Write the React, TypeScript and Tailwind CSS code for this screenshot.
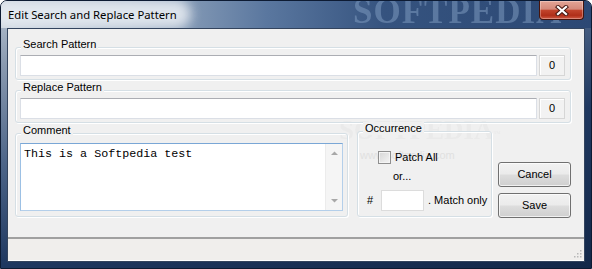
import React from "react";

function GroupBox({
  label,
  className,
  children,
}: {
  label: string;
  className?: string;
  children: React.ReactNode;
}) {
  return (
    <div
      className={
        "relative rounded-[3px] border border-[#d5dfe5] shadow-[inset_1px_1px_0_#ffffff,1px_1px_0_#ffffff] " +
        (className ?? "")
      }
    >
      <span className="absolute left-[5px] top-[-10px] bg-[#f0f0f0] px-[2px] leading-[13px]">
        {label}
      </span>
      {children}
    </div>
  );
}

function PatternRow() {
  return (
    <div className="flex gap-[2px]">
      <div className="h-[21px] flex-1 border border-[#dbdfe6] border-t-[#abadb3] bg-white" />
      <div className="flex h-[21px] w-[26px] items-center justify-center border border-[#d6d6d6] bg-[#f2f2f2] shadow-[inset_1px_1px_0_#ffffff]">
        0
      </div>
    </div>
  );
}

function WinButton({ children }: { children: React.ReactNode }) {
  return (
    <div className="flex h-[25px] w-[73px] items-center justify-center rounded-[3px] border border-[#707070] bg-[linear-gradient(180deg,#f2f2f2_0%,#ebebeb_48%,#dddddd_52%,#cfcfcf_100%)] text-[11px] shadow-[inset_0_0_0_1px_rgba(255,255,255,0.7)]">
      {children}
    </div>
  );
}

export default function App() {
  return (
    <div className="h-[269px] w-[592px] overflow-hidden bg-white font-['Liberation_Sans',Arial,sans-serif] text-[11px] leading-[13px] text-black">
      <div className="relative flex h-full w-full flex-col overflow-hidden rounded-t-[7px] border border-[#0d1b33] bg-[linear-gradient(165deg,#b9c5d3_0%,#8a9ab0_15%,#4e6689_38%,#1f3860_62%,#132849_100%)]">
        {/* Title bar */}
        <div className="relative flex h-[27px] shrink-0 items-start overflow-hidden bg-[linear-gradient(90deg,#c3cdd9_0%,#9fb0c4_22%,#5a779f_45%,#35537f_65%,#2c4874_100%)]">
          <div className="absolute left-[-10px] top-[-2px] h-[30px] w-[200px] rounded-full bg-[#e6ebf1] opacity-90 blur-[6px]" />
          <span className="absolute left-[352px] top-[-9px] whitespace-nowrap font-['Liberation_Serif',serif] text-[35px] font-bold leading-[40px] tracking-[1px] text-[#7d99be] opacity-55 blur-[0.7px]">
            SOFTPEDIA
          </span>
          <span className="relative ml-[7px] mt-[6px] whitespace-nowrap font-['Noto_Sans',sans-serif] text-[11.3px] leading-[15px] text-black">
            Edit Search and Replace Pattern
          </span>
          <div className="absolute right-[7px] top-0 flex h-[19px] w-[45px] items-center justify-center rounded-b-[4px] border border-t-0 border-[#47140c] bg-[linear-gradient(180deg,#e3a596_0%,#d4897a_45%,#c1442c_52%,#b02f19_80%,#cf5a43_100%)] shadow-[inset_0_0_0_1px_rgba(255,255,255,0.3)]">
            <svg width="14" height="11" viewBox="0 0 14 11">
              <g strokeLinecap="square">
                <line x1="3" y1="2" x2="11" y2="9" stroke="#4a1b14" strokeWidth="4.2" />
                <line x1="11" y1="2" x2="3" y2="9" stroke="#4a1b14" strokeWidth="4.2" />
                <line x1="3" y1="2" x2="11" y2="9" stroke="#ffffff" strokeWidth="2.2" />
                <line x1="11" y1="2" x2="3" y2="9" stroke="#ffffff" strokeWidth="2.2" />
              </g>
            </svg>
          </div>
        </div>

        {/* Body */}
        <div className="flex flex-1 px-[6px] pb-[6px]">
          <div className="relative flex flex-1 flex-col border border-[#33445e] bg-[#f0f0f0]">
            {/* client watermark */}
            <span className="pointer-events-none absolute left-[331px] top-[86px] whitespace-nowrap font-['Liberation_Serif',serif] text-[27px] font-bold leading-[30px] text-[#e8e8e8] opacity-70">
              SOFTPEDIA<sup className="text-[7px]">™</sup>
            </span>
            <span className="pointer-events-none absolute left-[352px] top-[120px] whitespace-nowrap text-[11px] text-[#e0e0e0]">
              www.softpedia.com
            </span>

            <div className="relative flex h-[208px] flex-col pl-[7px] pr-[13px] pt-[18px]">
              <GroupBox label="Search Pattern" className="pb-[3px] pl-[4px] pr-[5px] pt-[7px]">
                <PatternRow />
              </GroupBox>
              <GroupBox label="Replace Pattern" className="mt-[10px] pb-[3px] pl-[4px] pr-[5px] pt-[7px]">
                <PatternRow />
              </GroupBox>

              <div className="mt-[10px] flex items-start">
                <GroupBox label="Comment" className="w-[333px] px-[4px] pb-[5px] pt-[9px]">
                  <div className="flex h-[68px] border border-[#b4cfea] border-l-[#9cc0e4] border-t-[#7aa7d6] bg-white">
                    <div className="flex-1 pl-[3px] pt-[3px] font-['Liberation_Mono',monospace] text-[11.7px] leading-[14px]">
                      This is a Softpedia test
                    </div>
                    <div className="flex w-[17px] flex-col justify-between border-l border-[#ececec] bg-[#f5f5f5] py-[6px]">
                      <svg width="17" height="6" viewBox="0 0 17 6">
                        <path d="M5 5 L8.5 1.5 L12 5 Z" fill="#a8a8a8" />
                      </svg>
                      <svg width="17" height="6" viewBox="0 0 17 6">
                        <path d="M5 1 L12 1 L8.5 4.5 Z" fill="#a8a8a8" />
                      </svg>
                    </div>
                  </div>
                </GroupBox>

                <GroupBox label="Occurrence" className="ml-[9px] mt-[-2px] h-[86px] w-[135px] pl-[9px] pt-[19px]">
                  <div className="ml-[11px] flex items-center gap-[4px]">
                    <div className="h-[13px] w-[13px] border border-[#8f8f8f] bg-[linear-gradient(135deg,#d6d6d6_0%,#f4f4f4_100%)] shadow-[inset_0_0_0_1px_#f4f4f4]" />
                    <span>Patch All</span>
                  </div>
                  <div className="ml-[26px] mt-[6px]">or...</div>
                  <div className="mt-[7px] flex items-center">
                    <span className="w-[14px]">#</span>
                    <div className="h-[21px] w-[43px] border border-[#dcdcdc] bg-white" />
                    <span className="ml-[4px] whitespace-nowrap">. Match only</span>
                  </div>
                </GroupBox>

                <div className="ml-[6px] mt-[29px] flex flex-col gap-[6px]">
                  <WinButton>Cancel</WinButton>
                  <WinButton>Save</WinButton>
                </div>
              </div>
            </div>

            {/* Status bar */}
            <div className="relative h-[24px] border-b border-t-2 border-b-white border-t-[#a0a0a0] bg-[#f0eeec]">
              <svg className="absolute bottom-[2px] right-[2px]" width="10" height="10" viewBox="0 0 10 10">
                {[
                  [8, 2],
                  [5, 5],
                  [8, 5],
                  [2, 8],
                  [5, 8],
                  [8, 8],
                ].map(([x, y], i) => (
                  <rect key={i} x={x} y={y} width="1.5" height="1.5" fill="#b8b8b8" />
                ))}
              </svg>
            </div>
          </div>
        </div>
      </div>
    </div>
  );
}
